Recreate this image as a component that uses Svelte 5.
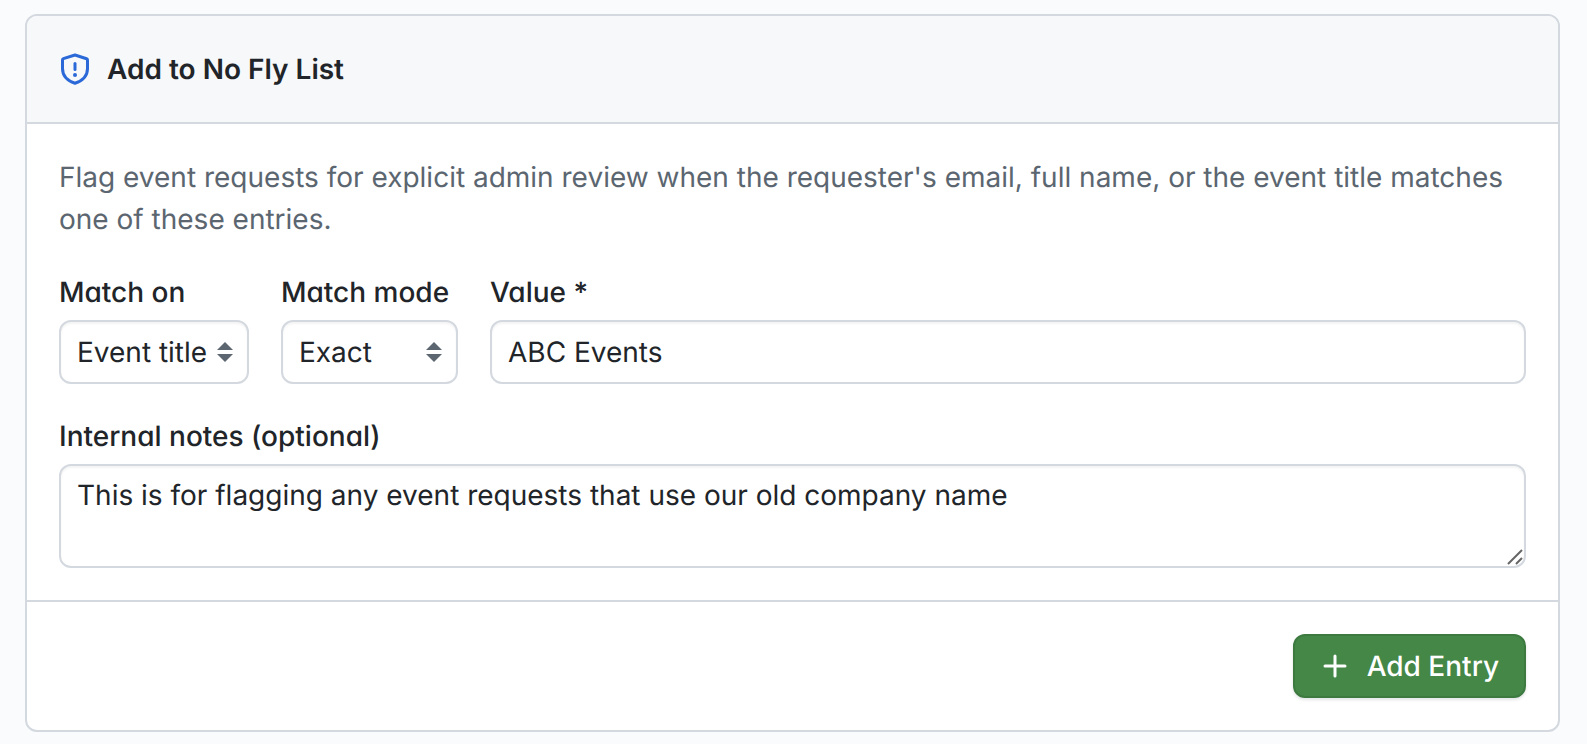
<script>
  let matchOn = $state('title');
  let matchMode = $state('exact');
  let value = $state('ABC Events');
  let notes = $state('This is for flagging any event requests that use our old company name');

  function handleSubmit(event) {
    event.preventDefault();
    value = '';
    notes = '';
  }
</script>

{#snippet sortArrows()}
  <svg class="arrows" viewBox="0 0 16 20" aria-hidden="true">
    <path d="M0 8 8 0l8 8zM0 12h16l-8 8z" fill="currentColor" />
  </svg>
{/snippet}

<form class="card" onsubmit={handleSubmit}>
  <header class="card-header">
    <svg class="shield" viewBox="0 0 32 32" aria-hidden="true">
      <path
        d="M16 2 27.6 5.7Q28.5 6 28.5 7V15.500c0 7-4.700 12.200-12.500 14.700C8.200 27.700 3.500 22.500 3.500 15.500V7Q3.500 6 4.400 5.700Z"
        fill="none"
        stroke="currentColor"
        stroke-width="3"
        stroke-linejoin="round"
      />
      <path d="M16 10.500v6" stroke="currentColor" stroke-width="3" stroke-linecap="round" />
      <circle cx="16" cy="22" r="2" fill="currentColor" />
    </svg>
    <h3>Add to No Fly List</h3>
  </header>

  <div class="card-body">
    <p>
      Flag event requests for explicit admin review when the requester's email, full name, or the
      event title matches one of these entries.
    </p>

    <div class="row">
      <div class="field">
        <label for="match-on">Match on</label>
        <div class="select-wrap">
          <select id="match-on" class="match-on" bind:value={matchOn}>
            <option value="email">Email</option>
            <option value="name">Full name</option>
            <option value="title">Event title</option>
          </select>
          {@render sortArrows()}
        </div>
      </div>

      <div class="field">
        <label for="match-mode">Match mode</label>
        <div class="select-wrap">
          <select id="match-mode" class="match-mode" bind:value={matchMode}>
            <option value="exact">Exact</option>
            <option value="contains">Contains</option>
          </select>
          {@render sortArrows()}
        </div>
      </div>

      <div class="field grow">
        <label for="value">Value *</label>
        <input id="value" type="text" required bind:value />
      </div>
    </div>

    <div class="field">
      <label for="notes">Internal notes (optional)</label>
      <div class="notes-wrap">
        <textarea id="notes" spellcheck="false" bind:value={notes}></textarea>
        <svg class="grip" viewBox="0 0 16 16" aria-hidden="true">
          <path d="M1 15 15 1M9 15l6-6" stroke="#666" stroke-width="2" />
        </svg>
      </div>
    </div>
  </div>

  <footer class="card-footer">
    <button type="submit">
      <svg class="plus" viewBox="0 0 24 24" aria-hidden="true">
        <path d="M12 2v20M2 12h20" stroke="currentColor" stroke-width="3" stroke-linecap="round" />
      </svg>
      Add Entry
    </button>
  </footer>
</form>

<style>
  :global(body) {
    background: #fafbfd;
  }

  .card {
    margin: 14px 27px 12px 25px;
    background: #fff;
    border: 2px solid #d3d9df;
    border-radius: 12px;
    overflow: hidden;

    color: #212529;
    font-family: Inter, 'Liberation Sans', sans-serif;
    font-size: 28px;
    font-optical-sizing: none;
    line-height: 42px;
    text-rendering: geometricPrecision;
  }

  .card-header {
    display: flex;
    align-items: center;
    gap: 16px;
    padding: 32px;
    background: #f6f8fa;
    border-bottom: 2px solid #d3d9df;
  }

  h3 {
    margin: 0;
    font-size: 28px;
    font-weight: 600;
  }

  .shield {
    width: 32px;
    height: 32px;
    color: #2c69d8;
  }

  .card-body {
    display: flex;
    flex-direction: column;
    gap: 32px;
    padding: 32px;
  }

  p {
    margin: 0;
    color: #5b6670;
  }

  .row {
    display: flex;
    gap: 32px;
  }

  .field {
    display: flex;
    flex-direction: column;
    gap: 8px;
  }

  .grow {
    flex: 1;
  }

  label {
    font-weight: 500;
    font-feature-settings: 'cv11';
    line-height: 40px;
  }

  input,
  select,
  textarea {
    box-sizing: border-box;
    width: 100%;
    height: 64px;
    margin: 0;
    padding: 0 16px;
    background: #fff;
    border: 2px solid #d3d9df;
    border-radius: 12px;
    box-shadow: inset 0 2px 2px rgba(31, 41, 55, 0.05);
    color: inherit;
    font: inherit;
    font-optical-sizing: none;
    text-rendering: inherit;
  }

  select {
    appearance: none;
  }

  .match-on {
    width: 190px;
  }

  .match-mode {
    width: 177px;
  }

  .select-wrap,
  .notes-wrap {
    position: relative;
    display: flex;
  }

  .arrows {
    position: absolute;
    top: 22px;
    right: 16px;
    width: 16px;
    height: 20px;
    color: #5b6670;
    pointer-events: none;
  }

  textarea {
    height: 104px;
    padding: 8px 16px;
    resize: vertical;
  }

  textarea::-webkit-resizer {
    display: none;
  }

  .grip {
    position: absolute;
    right: 3px;
    bottom: 3px;
    width: 16px;
    height: 16px;
    pointer-events: none;
  }

  .card-footer {
    display: flex;
    justify-content: flex-end;
    padding: 32px;
    border-top: 2px solid #d3d9df;
  }

  button {
    display: flex;
    align-items: center;
    gap: 20px;
    height: 64px;
    padding: 0 25px 0 28px;
    background: #448747;
    border: 2px solid #3d7a40;
    border-radius: 12px;
    box-shadow: 0 2px 3px rgba(31, 41, 55, 0.12);
    color: #fff;
    font: inherit;
    font-weight: 500;
    font-optical-sizing: none;
    text-rendering: inherit;
    cursor: pointer;
  }

  .plus {
    width: 24px;
    height: 24px;
  }
</style>
